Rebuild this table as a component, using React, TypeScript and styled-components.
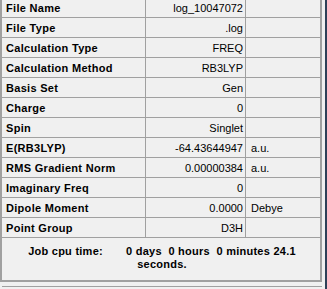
import React from "react";
import styled, { createGlobalStyle } from "styled-components";

const GlobalStyle = createGlobalStyle`
  html, body {
    margin: 0;
    padding: 0;
    background: #f0f0f0;
    overflow: hidden;
  }
  body {
    font-family: "Liberation Sans", Arial, sans-serif;
    font-size: 11px;
    color: #000;
  }
`;

const Window = styled.div`
  width: 327px;
  height: 289px;
  box-sizing: border-box;
  border-right: 2px solid #2e4057;
  padding-right: 3px;
  overflow: hidden;
  background: #f0f0f0;
`;

const Panel = styled.div`
  width: 322px;
  height: 282px;
  box-sizing: border-box;
  border-left: 2px solid #a0a0a0;
  border-right: 2px solid #a0a0a0;
  border-bottom: 2px solid #a0a0a0;
  display: flex;
  flex-direction: column;
  overflow: hidden;
`;

const Grid = styled.div`
  display: grid;
  grid-template-columns: 144px 100px 1fr;
  margin-top: -2px;
`;

const Cell = styled.div<{ $kind: "label" | "value" | "unit" }>`
  height: 19px;
  border-bottom: 1px solid #a0a0a0;
  border-right: ${(p) => (p.$kind === "unit" ? "none" : "1px solid #a0a0a0")};
  display: flex;
  align-items: center;
  justify-content: ${(p) => (p.$kind === "value" ? "flex-end" : "flex-start")};
  padding: ${(p) =>
    p.$kind === "label" ? "0 0 0 4px" : p.$kind === "value" ? "0 2px 0 0" : "0 0 0 5px"};
  font-weight: ${(p) => (p.$kind === "label" ? 700 : 400)};
  letter-spacing: ${(p) => (p.$kind === "label" ? "0.3px" : "0")};
  white-space: nowrap;
  overflow: hidden;
`;

const Footer = styled.div`
  flex: 1;
  display: flex;
  align-items: center;
  justify-content: center;
  padding: 0 8px 2px 10px;
`;

const FooterText = styled.p`
  margin: 0;
  font-weight: 700;
  letter-spacing: 0.25px;
  text-align: center;
  line-height: 13px;
  white-space: pre-wrap;
`;

const BottomRule = styled.div`
  margin: 4px 0 0 2px;
  width: 320px;
  border-top: 1px solid #a0a0a0;
`;

const rows: [string, string, string][] = [
  ["File Name", "log_10047072", ""],
  ["File Type", ".log", ""],
  ["Calculation Type", "FREQ", ""],
  ["Calculation Method", "RB3LYP", ""],
  ["Basis Set", "Gen", ""],
  ["Charge", "0", ""],
  ["Spin", "Singlet", ""],
  ["E(RB3LYP)", "-64.43644947", "a.u."],
  ["RMS Gradient Norm", "0.00000384", "a.u."],
  ["Imaginary Freq", "0", ""],
  ["Dipole Moment", "0.0000", "Debye"],
  ["Point Group", "D3H", ""],
];

export default function App() {
  return (
    <>
      <GlobalStyle />
      <Window>
        <Panel>
          <Grid>
            {rows.map(([label, value, unit]) => (
              <React.Fragment key={label}>
                <Cell $kind="label">{label}</Cell>
                <Cell $kind="value">{value}</Cell>
                <Cell $kind="unit">{unit}</Cell>
              </React.Fragment>
            ))}
          </Grid>
          <Footer>
            <FooterText>
              {"Job cpu time:       0 days  0 hours  0 minutes 24.1 seconds."}
            </FooterText>
          </Footer>
        </Panel>
        <BottomRule />
      </Window>
    </>
  );
}
